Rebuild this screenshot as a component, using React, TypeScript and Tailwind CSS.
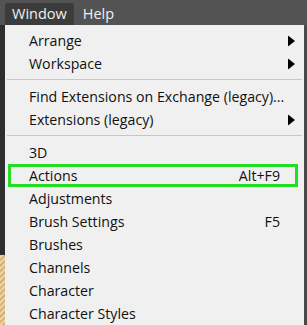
import React from "react";

const Arrow = () => (
  <svg width="7" height="11" viewBox="0 0 7 11" className="absolute right-[9px] top-1/2 -translate-y-1/2">
    <polygon points="0,0 7,5.5 0,11" fill="#000" />
  </svg>
);

function Item({ label, shortcut, arrow }: { label: string; shortcut?: string; arrow?: boolean }) {
  return (
    <div className="relative flex h-[23px] items-center pl-[24px] pr-[24px] text-[14.2px] text-[#111]">
      <span className="flex-1 whitespace-nowrap">{label}</span>
      {shortcut && <span className="whitespace-nowrap">{shortcut}</span>}
      {arrow && <Arrow />}
    </div>
  );
}

const Sep = () => <div className="mx-[2px] mb-[5px] mt-[4px] h-px bg-[#c6c6c6]" />;

export default function App() {
  return (
    <div
      className="relative h-[325px] w-[307px] overflow-hidden bg-[#3b3b3b]"
      style={{ fontFamily: '"Open Sans", "Noto Sans", sans-serif' }}
    >
      <div className="flex h-[25px] items-end bg-[#535353] pl-[5px] text-[14.5px] text-[#f0f0f0]">
        <div className="flex h-[22px] items-center rounded-t-[2px] bg-[#3c3c3c] px-[7px] pb-[1px]">Window</div>
        <div className="flex h-[22px] items-center px-[9px] pb-[1px]">Help</div>
      </div>
      <div className="flex">
        <div className="flex w-[5px] flex-col">
          <div className="h-[230px] bg-[#2e2e2e]" />
          <div className="flex-1 bg-[repeating-linear-gradient(135deg,#d9b77a_0px,#f2dcb0_2px,#c49a5b_4px)]" />
        </div>
        <div className="w-[299px] bg-[#f0f0f0] pb-[10px] pt-[4px]">
          <Item label="Arrange" arrow />
          <Item label="Workspace" arrow />
          <Sep />
          <Item label="Find Extensions on Exchange (legacy)..." />
          <Item label="Extensions (legacy)" arrow />
          <Sep />
          <Item label="3D" />
          <div className="relative ml-[3px] mr-[6px] border-[3px] border-[#22dd22]">
            <div className="-ml-[6px] -mr-[9px] -my-[3px]">
              <Item label="Actions" shortcut="Alt+F9" />
            </div>
          </div>
          <Item label="Adjustments" />
          <Item label="Brush Settings" shortcut="F5" />
          <Item label="Brushes" />
          <Item label="Channels" />
          <Item label="Character" />
          <Item label="Character Styles" />
        </div>
        <div className="w-[3px] bg-[#4a4a4a]" />
      </div>
    </div>
  );
}
